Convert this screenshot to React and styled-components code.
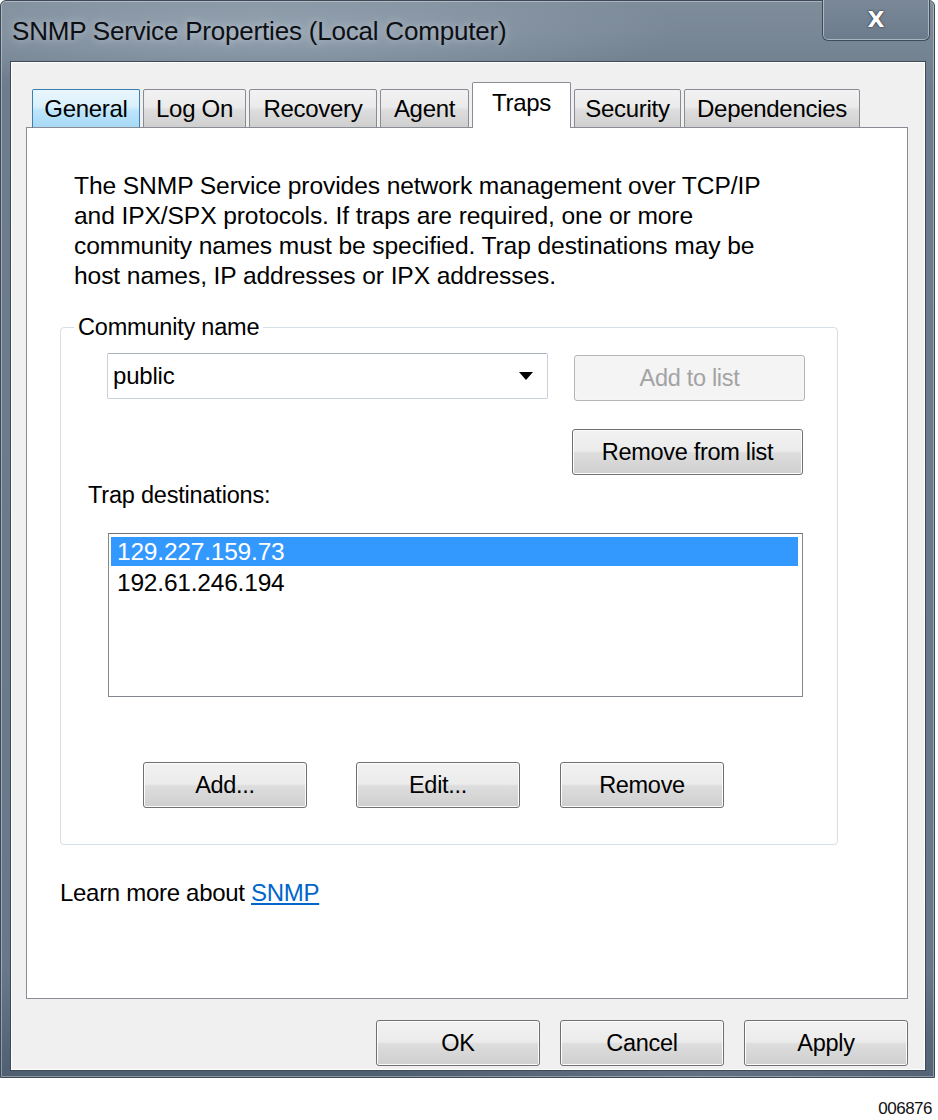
import React, { useState } from "react";
import styled, { createGlobalStyle } from "styled-components";

const GlobalStyle = createGlobalStyle`
  html, body {
    margin: 0;
    padding: 0;
    background: #ffffff;
  }
  body {
    font-family: "Liberation Sans", Arial, sans-serif;
    color: #000;
  }
`;

const Page = styled.div`
  width: 938px;
  height: 1120px;
  position: relative;
  background: #fff;
`;

const Window = styled.div`
  width: 935px;
  height: 1078px;
  box-sizing: border-box;
  display: flex;
  flex-direction: column;
  background:
    radial-gradient(ellipse 420px 60px at 260px 30px, rgba(170, 184, 198, 0.55), transparent),
    radial-gradient(ellipse 300px 50px at 700px 1075px, rgba(110, 125, 142, 0.6), transparent),
    linear-gradient(180deg, #7f8d9b 0%, #6e7d8d 8%, #68788a 90%, #4f5f72 100%);
  border: 1px solid #3d4957;
  border-radius: 6px 6px 0 0;
  box-shadow: inset 0 0 0 1px rgba(255, 255, 255, 0.35);
`;

const TitleBar = styled.div`
  height: 60px;
  display: flex;
  align-items: flex-start;
  justify-content: space-between;
  padding-left: 11px;
`;

const Title = styled.div`
  margin-top: 15px;
  font-size: 26px;
  color: #0c0f14;
  letter-spacing: -0.2px;
  text-shadow: 0 0 8px rgba(255, 255, 255, 0.5);
`;

const CloseButton = styled.div`
  width: 108px;
  height: 42px;
  margin-right: 4px;
  margin-top: -2px;
  box-sizing: border-box;
  border: 1px solid #3f4b58;
  border-top: none;
  border-radius: 0 0 6px 6px;
  box-shadow: inset 0 0 0 1px rgba(220, 228, 236, 0.55);
  background: linear-gradient(180deg, #7a8898, #6c7b8c);
  display: flex;
  align-items: center;
  justify-content: center;
  color: #fff;
  font-family: "DejaVu Sans", sans-serif;
  font-weight: bold;
  font-size: 22px;
  text-shadow: 0 0 2px #1e2833, 0 0 1px #1e2833;
`;

const Client = styled.div`
  flex: 1;
  margin: 0 8px 6px 9px;
  background: #f0f0f0;
  border: 1px solid #3d4957;
  box-shadow: inset 0 0 0 1px #ffffff;
  display: flex;
  flex-direction: column;
  padding: 21px 17px 0 15px;
`;

const TabStrip = styled.div`
  display: flex;
  align-items: flex-end;
  padding-left: 6px;
  height: 45px;
  position: relative;
  z-index: 2;
  margin-bottom: -1px;
`;

const Tab = styled.div`
  box-sizing: border-box;
  width: ${(p) => p.$w}px;
  height: ${(p) => (p.$active ? "46px" : "39px")};
  margin-left: 3px;
  display: flex;
  justify-content: center;
  align-items: ${(p) => (p.$active ? "flex-start" : "center")};
  padding-top: ${(p) => (p.$active ? "6px" : "0")};
  font-size: 24px;
  letter-spacing: -0.3px;
  white-space: nowrap;
  border: 1px solid ${(p) => (p.$hover ? "#3c7fb1" : "#898c95")};
  border-bottom: ${(p) => (p.$active ? "none" : "1px solid #898c95")};
  border-radius: 2px 2px 0 0;
  background: ${(p) =>
    p.$active
      ? "#ffffff"
      : p.$hover
      ? "linear-gradient(180deg, #eaf6fd 0%, #d9f0fc 45%, #bee6fd 55%, #a7d9f5 100%)"
      : "linear-gradient(180deg, #f2f2f2 0%, #ebebeb 45%, #dddddd 55%, #cfcfcf 100%)"};
  &:first-child {
    margin-left: 0;
  }
`;

const Panel = styled.div`
  height: 872px;
  box-sizing: border-box;
  background: #fff;
  border: 1px solid #898c95;
  padding: 43px 0 0 33px;
  display: flex;
  flex-direction: column;
`;

const Description = styled.p`
  margin: 0 0 0 14px;
  font-size: 24.6px;
  line-height: 30px;
  letter-spacing: -0.1px;
  width: 780px;
  white-space: nowrap;
`;

const Group = styled.fieldset`
  margin: 22px 0 0 0;
  width: 778px;
  height: 532px;
  box-sizing: border-box;
  padding: 0;
  border: 1px solid #d5dfe5;
  border-radius: 4px;
  display: flex;
  flex-direction: column;
  min-inline-size: 0;
`;

const Legend = styled.legend`
  margin-left: 13px;
  padding: 0 4px;
  font-size: 23.5px;
  line-height: 28px;
  letter-spacing: -0.2px;
`;

const ComboRow = styled.div`
  display: flex;
  gap: 26px;
  margin: 12px 0 0 46px;
  align-items: flex-start;
`;

const Combo = styled.div`
  width: 441px;
  height: 46px;
  box-sizing: border-box;
  border: 1px solid #c9d0d8;
  border-top-color: #abb3bc;
  border-radius: 2px;
  background: #fff;
  display: flex;
  align-items: center;
  justify-content: space-between;
  padding: 0 14px 0 5px;
  font-size: 24px;
  letter-spacing: -0.2px;
`;

const Arrow = styled.span`
  width: 0;
  height: 0;
  border-left: 7px solid transparent;
  border-right: 7px solid transparent;
  border-top: 8px solid #000;
`;

const Button = styled.button`
  box-sizing: border-box;
  width: ${(p) => p.$w || "164px"};
  height: 46px;
  margin-top: ${(p) => p.$mt || "0"};
  margin-left: ${(p) => p.$ml || "0"};
  padding: 0;
  font-family: "Liberation Sans", Arial, sans-serif;
  font-size: 23.5px;
  letter-spacing: -0.3px;
  color: ${(p) => (p.disabled ? "#a3a3a3" : "#000")};
  border: 1px solid ${(p) => (p.disabled ? "#b3b6b9" : "#707070")};
  border-radius: 3px;
  box-shadow: inset 0 0 0 1px ${(p) => (p.disabled ? "#f6f6f6" : "#fcfcfc")};
  background: ${(p) =>
    p.disabled
      ? "#f4f4f4"
      : "linear-gradient(180deg, #f2f2f2 0%, #ebebeb 48%, #dddddd 52%, #cfcfcf 100%)"};
  cursor: default;
`;

const RightColumn = styled.div`
  display: flex;
  justify-content: flex-end;
  margin: 28px 34px 0 0;
`;

const Label = styled.div`
  margin: 7px 0 0 27px;
  font-size: 23.5px;
  letter-spacing: -0.2px;
  line-height: 26px;
`;

const ListBox = styled.div`
  margin: 25px 0 0 47px;
  width: 695px;
  height: 164px;
  box-sizing: border-box;
  border: 1px solid #828790;
  border-top-color: #6f737a;
  background: #fff;
  padding: 3px 4px 0 2px;
`;

const ListItem = styled.div`
  height: 29px;
  line-height: 29px;
  padding-left: 6px;
  font-size: 24.5px;
  letter-spacing: -0.2px;
  color: ${(p) => (p.$selected ? "#fff" : "#000")};
  background: ${(p) => (p.$selected ? "#3399ff" : "transparent")};
  margin-bottom: 2px;
`;

const ButtonRow = styled.div`
  display: flex;
  margin: 65px 0 0 82px;
`;

const LearnMore = styled.div`
  margin: 34px 0 0 0;
  font-size: 24px;
  letter-spacing: -0.3px;
  a {
    color: #0066cc;
    text-decoration: underline;
  }
`;

const Footer = styled.div`
  display: flex;
  justify-content: flex-end;
  gap: 20px;
  margin-top: 21px;
`;

const Code = styled.div`
  position: absolute;
  right: 6px;
  bottom: 1px;
  font-family: "Liberation Sans", Arial, sans-serif;
  font-size: 17px;
  letter-spacing: -0.5px;
  color: #111;
`;

const tabs = [
  { name: "General", w: 108 },
  { name: "Log On", w: 103 },
  { name: "Recovery", w: 128 },
  { name: "Agent", w: 89 },
  { name: "Traps", w: 99 },
  { name: "Security", w: 107 },
  { name: "Dependencies", w: 176 },
];

export default function App() {
  const [active] = useState("Traps");
  const [selected, setSelected] = useState(0);
  const destinations = ["129.227.159.73", "192.61.246.194"];

  return (
    <Page>
      <GlobalStyle />
      <Window>
        <TitleBar>
          <Title>SNMP Service Properties (Local Computer)</Title>
          <CloseButton>X</CloseButton>
        </TitleBar>
        <Client>
          <TabStrip>
            {tabs.map((t) => (
              <Tab key={t.name} $w={t.w} $active={t.name === active} $hover={t.name === "General"}>
                {t.name}
              </Tab>
            ))}
          </TabStrip>
          <Panel>
            <Description>
              The SNMP Service provides network management over TCP/IP
              <br />
              and IPX/SPX protocols. If traps are required, one or more
              <br />
              community names must be specified. Trap destinations may be
              <br />
              host names, IP addresses or IPX addresses.
            </Description>
            <Group>
              <Legend>Community name</Legend>
              <ComboRow>
                <Combo>
                  <span>public</span>
                  <Arrow />
                </Combo>
                <Button $w="231px" $mt="2px" disabled>
                  Add to list
                </Button>
              </ComboRow>
              <RightColumn>
                <Button $w="231px">Remove from list</Button>
              </RightColumn>
              <Label>Trap destinations:</Label>
              <ListBox>
                {destinations.map((d, i) => (
                  <ListItem key={d} $selected={i === selected} onClick={() => setSelected(i)}>
                    {d}
                  </ListItem>
                ))}
              </ListBox>
              <ButtonRow>
                <Button>Add...</Button>
                <Button $ml="49px">Edit...</Button>
                <Button $ml="40px">Remove</Button>
              </ButtonRow>
            </Group>
            <LearnMore>
              Learn more about <a href="#snmp">SNMP</a>
            </LearnMore>
          </Panel>
          <Footer>
            <Button>OK</Button>
            <Button>Cancel</Button>
            <Button>Apply</Button>
          </Footer>
        </Client>
      </Window>
      <Code>006876</Code>
    </Page>
  );
}
